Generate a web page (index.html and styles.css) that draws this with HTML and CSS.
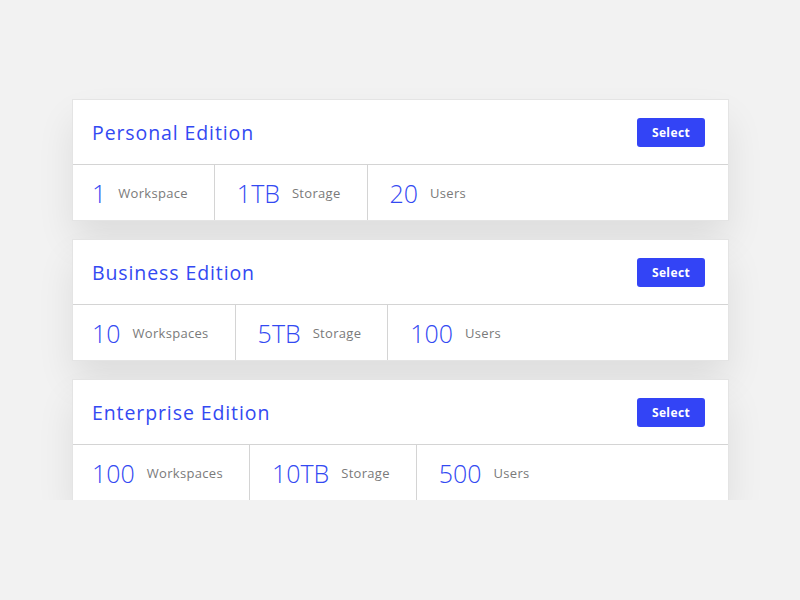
FILE: index.html
```html
<!DOCTYPE html>
<html lang="en">
<head>
    <meta charset="UTF-8">
    <title>Editions</title>
    <link rel="stylesheet" href="styles.css">
</head>
<body>
    <div class="plans">
        <div class="plan">
            <div class="plan-head">
                <h2>Personal Edition</h2>
                <button>Select</button>
            </div>
            <div class="stats">
                <div class="stat"><span class="num">1</span><span class="label">Workspace</span></div>
                <div class="stat"><span class="num">1TB</span><span class="label">Storage</span></div>
                <div class="stat"><span class="num">20</span><span class="label">Users</span></div>
            </div>
        </div>
        <div class="plan">
            <div class="plan-head">
                <h2>Business Edition</h2>
                <button>Select</button>
            </div>
            <div class="stats">
                <div class="stat"><span class="num">10</span><span class="label">Workspaces</span></div>
                <div class="stat"><span class="num">5TB</span><span class="label">Storage</span></div>
                <div class="stat"><span class="num">100</span><span class="label">Users</span></div>
            </div>
        </div>
        <div class="plan">
            <div class="plan-head">
                <h2>Enterprise Edition</h2>
                <button>Select</button>
            </div>
            <div class="stats">
                <div class="stat"><span class="num">100</span><span class="label">Workspaces</span></div>
                <div class="stat"><span class="num">10TB</span><span class="label">Storage</span></div>
                <div class="stat"><span class="num">500</span><span class="label">Users</span></div>
            </div>
        </div>
    </div>
</body>
</html>
```
FILE: styles.css
```css
body {
    margin: 0;
    background-color: #f2f2f2;
    font-family: "Open Sans", Arial, sans-serif;
}
.plans {
    width: 655px;
    margin: 0 auto;
    padding-top: 100px;
    padding-left: 1px;
    display: flex;
    flex-direction: column;
    gap: 20px;
}
.plan {
    background: white;
    box-shadow: 0 0 0 1px #e4e4e4, 0 20px 36px rgba(0,0,0,0.09);
}
.plan-head {
    height: 64px;
    display: flex;
    align-items: center;
    justify-content: space-between;
    padding: 0 23px 0 19px;
    border-bottom: 1px solid #d4d4d4;
}
h2 {
    margin: 0;
    font-size: 19.5px;
    font-weight: 500;
    letter-spacing: 0.9px;
    color: #3349f2;
}
button {
    background-color: #3344f6;
    color: white;
    border: none;
    border-radius: 3px;
    width: 68px;
    height: 29px;
    font-family: "Open Sans", Arial, sans-serif;
    font-size: 12px;
    font-weight: 700;
    letter-spacing: 0.4px;
    cursor: pointer;
}
.stats {
    display: flex;
    height: 55px;
}
.stat {
    display: flex;
    align-items: center;
    padding: 0 26px 0 22px;
    border-right: 1px solid #d4d4d4;
}
.stat:first-child {
    padding-left: 19px;
}
.stat:last-child {
    border-right: none;
}
.num {
    font-size: 25px;
    font-weight: 300;
    color: #3349f2;
    margin-right: 12px;
}
.label {
    font-size: 13px;
    color: #7a7a7a;
    letter-spacing: 0.3px;
}
```
